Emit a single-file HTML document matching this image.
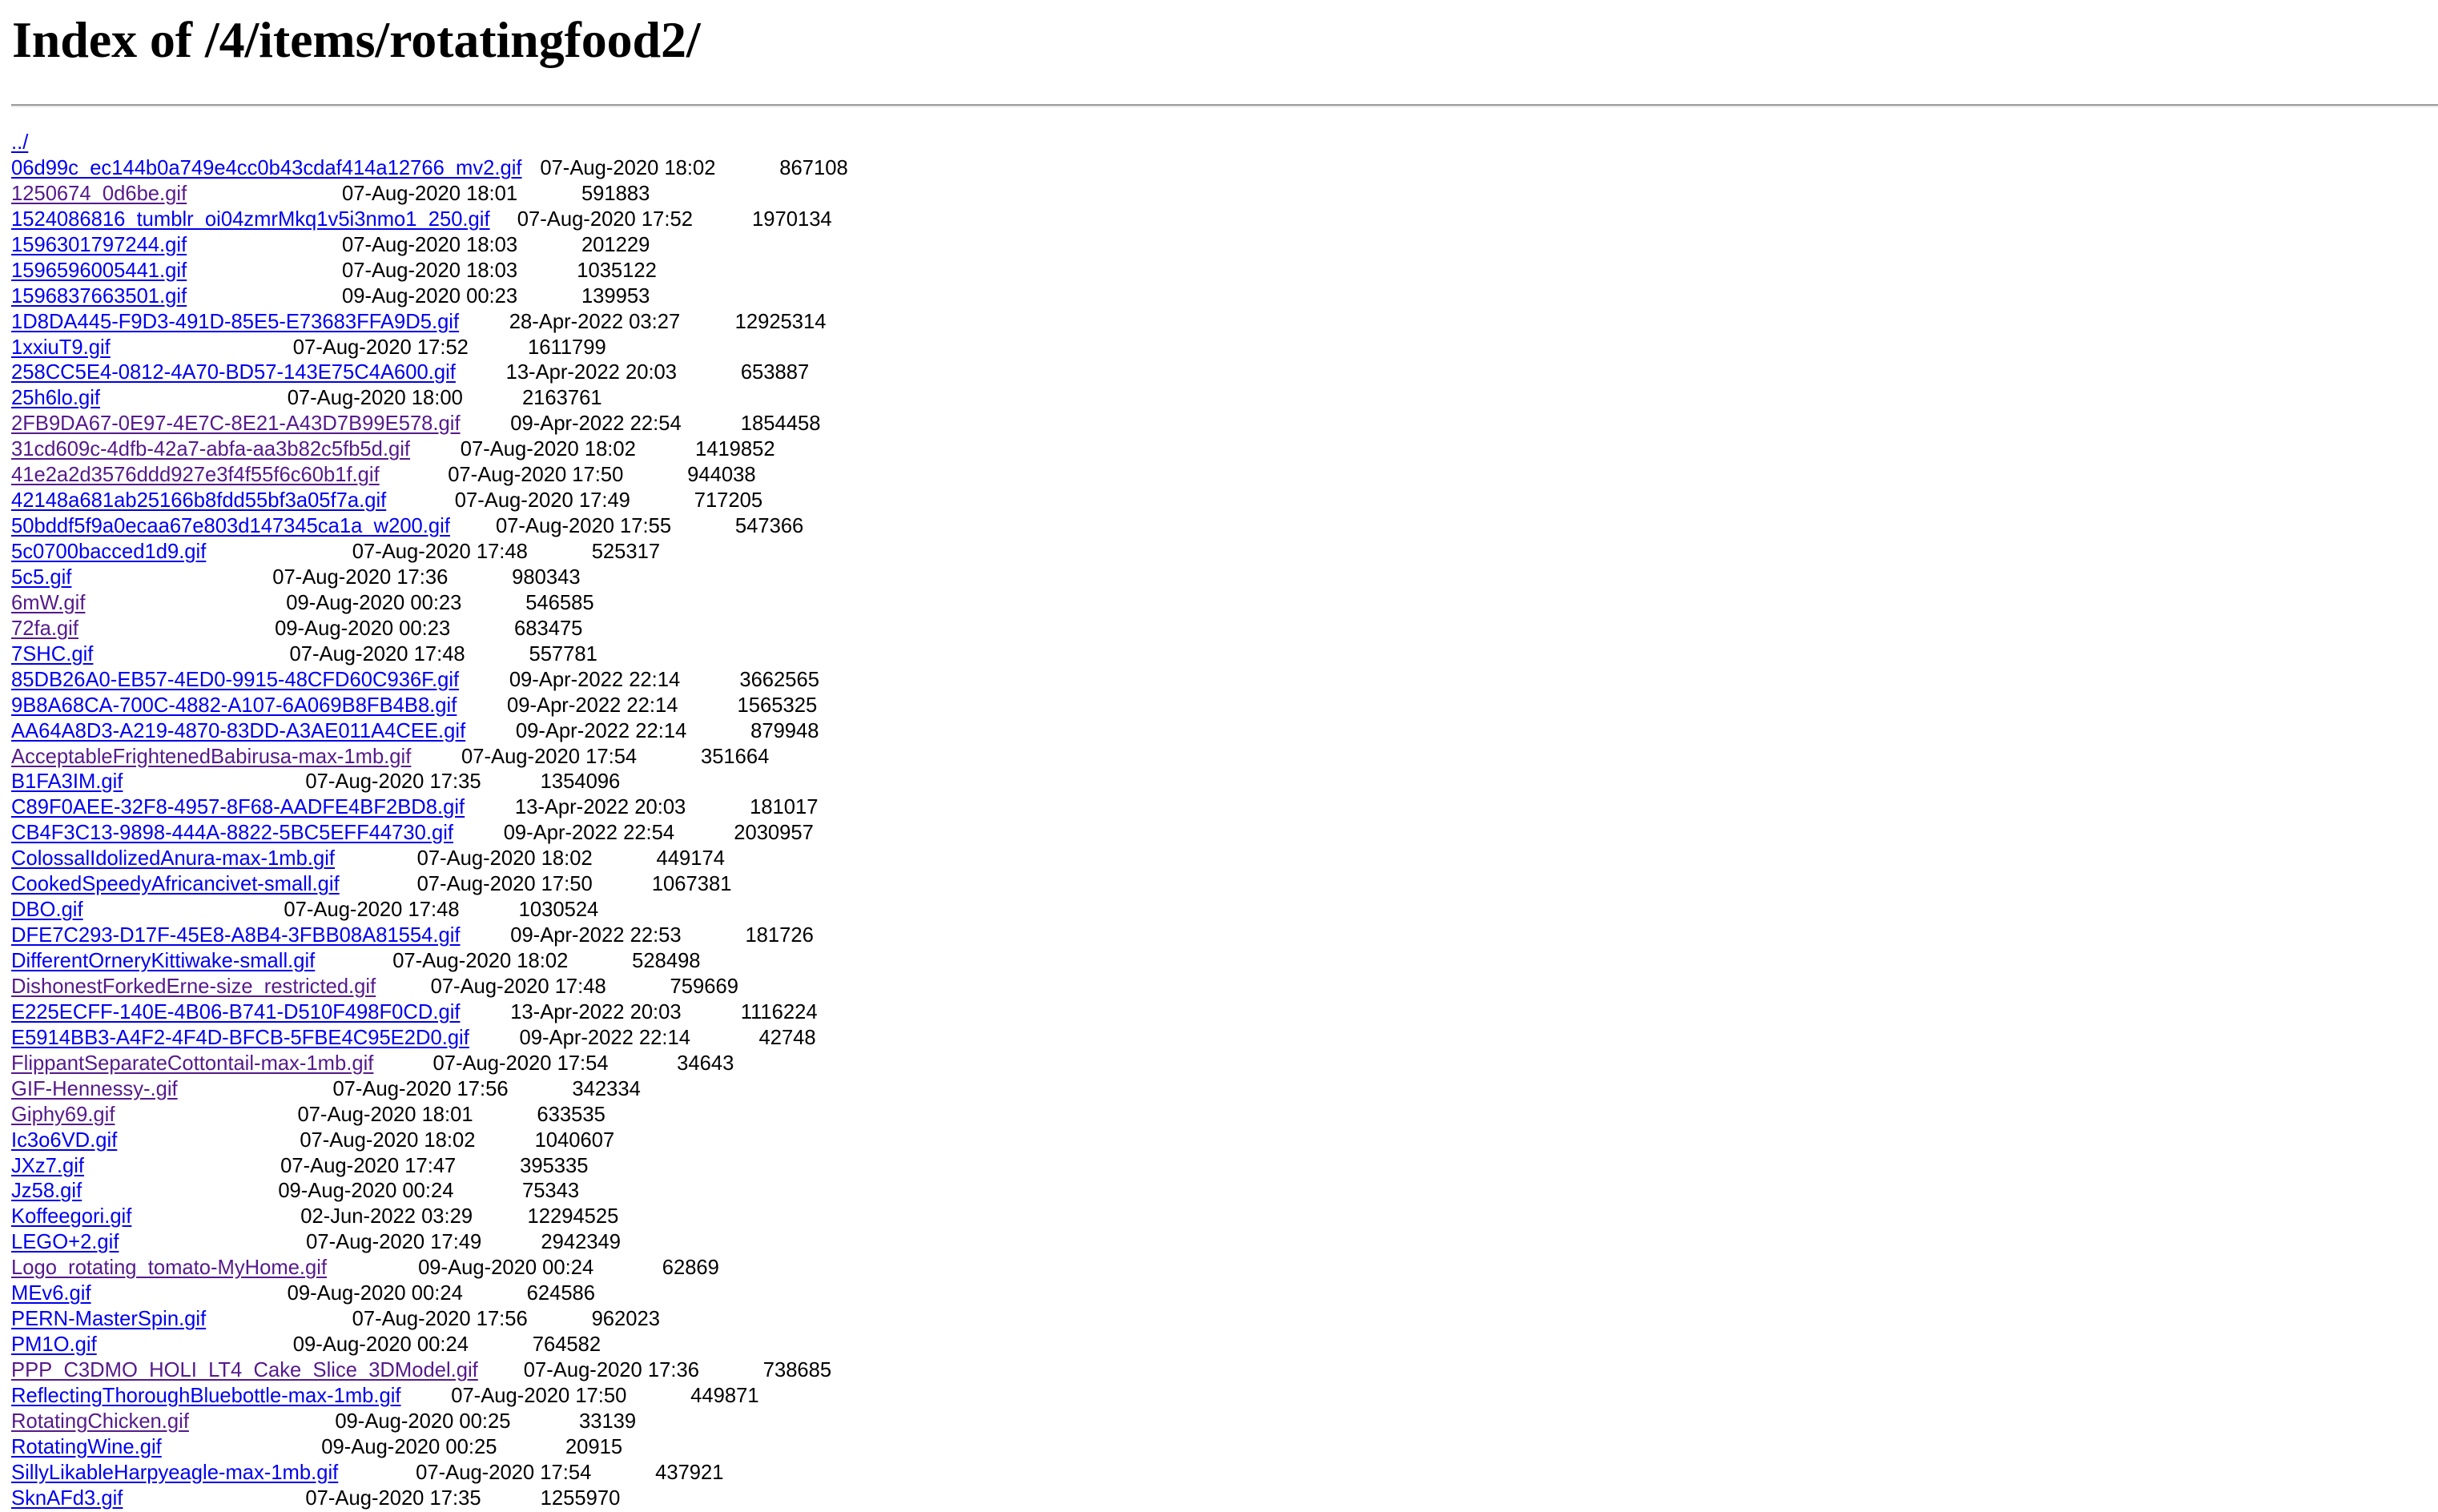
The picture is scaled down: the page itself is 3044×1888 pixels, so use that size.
<!DOCTYPE html>
<html><head><meta charset="utf-8"><style>
html,body{margin:0;padding:0;background:#fff;width:3044px;height:1878px;overflow:hidden}
h1{position:absolute;left:15px;top:18px;margin:0;font:bold 64px/64px "Liberation Serif",serif;color:#000;white-space:nowrap;letter-spacing:-0.1px}
.hr{position:absolute;left:14px;right:0;top:130px;height:2px;background:#9a9a9a;border-bottom:2px solid #e8e8e8}
.l{position:absolute;left:14px;top:163px;font:25.6px/31.94px "Liberation Sans",sans-serif;color:#000;white-space:normal}
.l div{height:31.94px;white-space:nowrap}
a{color:#0000ee;text-decoration:underline;text-underline-offset:3px}
a.v{color:#551a8b}
b{display:inline-block;width:calc(var(--n)*5.7px)}
</style></head><body>
<h1>Index of /4/items/rotatingfood2/</h1>
<div class="hr"></div>
<div class="l">
<div><a>../</a></div>
<div><a>06d99c_ec144b0a749e4cc0b43cdaf414a12766_mv2.gif</a><b style="--n:4"></b>07-Aug-2020 18:02<b style="--n:14"></b>867108</div>
<div><a class="v">1250674_0d6be.gif</a><b style="--n:34"></b>07-Aug-2020 18:01<b style="--n:14"></b>591883</div>
<div><a>1524086816_tumblr_oi04zmrMkq1v5i3nmo1_250.gif</a><b style="--n:6"></b>07-Aug-2020 17:52<b style="--n:13"></b>1970134</div>
<div><a>1596301797244.gif</a><b style="--n:34"></b>07-Aug-2020 18:03<b style="--n:14"></b>201229</div>
<div><a>1596596005441.gif</a><b style="--n:34"></b>07-Aug-2020 18:03<b style="--n:13"></b>1035122</div>
<div><a>1596837663501.gif</a><b style="--n:34"></b>09-Aug-2020 00:23<b style="--n:14"></b>139953</div>
<div><a>1D8DA445-F9D3-491D-85E5-E73683FFA9D5.gif</a><b style="--n:11"></b>28-Apr-2022 03:27<b style="--n:12"></b>12925314</div>
<div><a>1xxiuT9.gif</a><b style="--n:40"></b>07-Aug-2020 17:52<b style="--n:13"></b>1611799</div>
<div><a>258CC5E4-0812-4A70-BD57-143E75C4A600.gif</a><b style="--n:11"></b>13-Apr-2022 20:03<b style="--n:14"></b>653887</div>
<div><a>25h6lo.gif</a><b style="--n:41"></b>07-Aug-2020 18:00<b style="--n:13"></b>2163761</div>
<div><a class="v">2FB9DA67-0E97-4E7C-8E21-A43D7B99E578.gif</a><b style="--n:11"></b>09-Apr-2022 22:54<b style="--n:13"></b>1854458</div>
<div><a class="v">31cd609c-4dfb-42a7-abfa-aa3b82c5fb5d.gif</a><b style="--n:11"></b>07-Aug-2020 18:02<b style="--n:13"></b>1419852</div>
<div><a class="v">41e2a2d3576ddd927e3f4f55f6c60b1f.gif</a><b style="--n:15"></b>07-Aug-2020 17:50<b style="--n:14"></b>944038</div>
<div><a>42148a681ab25166b8fdd55bf3a05f7a.gif</a><b style="--n:15"></b>07-Aug-2020 17:49<b style="--n:14"></b>717205</div>
<div><a>50bddf5f9a0ecaa67e803d147345ca1a_w200.gif</a><b style="--n:10"></b>07-Aug-2020 17:55<b style="--n:14"></b>547366</div>
<div><a>5c0700bacced1d9.gif</a><b style="--n:32"></b>07-Aug-2020 17:48<b style="--n:14"></b>525317</div>
<div><a>5c5.gif</a><b style="--n:44"></b>07-Aug-2020 17:36<b style="--n:14"></b>980343</div>
<div><a class="v">6mW.gif</a><b style="--n:44"></b>09-Aug-2020 00:23<b style="--n:14"></b>546585</div>
<div><a class="v">72fa.gif</a><b style="--n:43"></b>09-Aug-2020 00:23<b style="--n:14"></b>683475</div>
<div><a>7SHC.gif</a><b style="--n:43"></b>07-Aug-2020 17:48<b style="--n:14"></b>557781</div>
<div><a>85DB26A0-EB57-4ED0-9915-48CFD60C936F.gif</a><b style="--n:11"></b>09-Apr-2022 22:14<b style="--n:13"></b>3662565</div>
<div><a>9B8A68CA-700C-4882-A107-6A069B8FB4B8.gif</a><b style="--n:11"></b>09-Apr-2022 22:14<b style="--n:13"></b>1565325</div>
<div><a>AA64A8D3-A219-4870-83DD-A3AE011A4CEE.gif</a><b style="--n:11"></b>09-Apr-2022 22:14<b style="--n:14"></b>879948</div>
<div><a class="v">AcceptableFrightenedBabirusa-max-1mb.gif</a><b style="--n:11"></b>07-Aug-2020 17:54<b style="--n:14"></b>351664</div>
<div><a>B1FA3IM.gif</a><b style="--n:40"></b>07-Aug-2020 17:35<b style="--n:13"></b>1354096</div>
<div><a>C89F0AEE-32F8-4957-8F68-AADFE4BF2BD8.gif</a><b style="--n:11"></b>13-Apr-2022 20:03<b style="--n:14"></b>181017</div>
<div><a>CB4F3C13-9898-444A-8822-5BC5EFF44730.gif</a><b style="--n:11"></b>09-Apr-2022 22:54<b style="--n:13"></b>2030957</div>
<div><a>ColossalIdolizedAnura-max-1mb.gif</a><b style="--n:18"></b>07-Aug-2020 18:02<b style="--n:14"></b>449174</div>
<div><a>CookedSpeedyAfricancivet-small.gif</a><b style="--n:17"></b>07-Aug-2020 17:50<b style="--n:13"></b>1067381</div>
<div><a>DBO.gif</a><b style="--n:44"></b>07-Aug-2020 17:48<b style="--n:13"></b>1030524</div>
<div><a>DFE7C293-D17F-45E8-A8B4-3FBB08A81554.gif</a><b style="--n:11"></b>09-Apr-2022 22:53<b style="--n:14"></b>181726</div>
<div><a>DifferentOrneryKittiwake-small.gif</a><b style="--n:17"></b>07-Aug-2020 18:02<b style="--n:14"></b>528498</div>
<div><a class="v">DishonestForkedErne-size_restricted.gif</a><b style="--n:12"></b>07-Aug-2020 17:48<b style="--n:14"></b>759669</div>
<div><a>E225ECFF-140E-4B06-B741-D510F498F0CD.gif</a><b style="--n:11"></b>13-Apr-2022 20:03<b style="--n:13"></b>1116224</div>
<div><a>E5914BB3-A4F2-4F4D-BFCB-5FBE4C95E2D0.gif</a><b style="--n:11"></b>09-Apr-2022 22:14<b style="--n:15"></b>42748</div>
<div><a class="v">FlippantSeparateCottontail-max-1mb.gif</a><b style="--n:13"></b>07-Aug-2020 17:54<b style="--n:15"></b>34643</div>
<div><a class="v">GIF-Hennessy-.gif</a><b style="--n:34"></b>07-Aug-2020 17:56<b style="--n:14"></b>342334</div>
<div><a class="v">Giphy69.gif</a><b style="--n:40"></b>07-Aug-2020 18:01<b style="--n:14"></b>633535</div>
<div><a>Ic3o6VD.gif</a><b style="--n:40"></b>07-Aug-2020 18:02<b style="--n:13"></b>1040607</div>
<div><a>JXz7.gif</a><b style="--n:43"></b>07-Aug-2020 17:47<b style="--n:14"></b>395335</div>
<div><a>Jz58.gif</a><b style="--n:43"></b>09-Aug-2020 00:24<b style="--n:15"></b>75343</div>
<div><a>Koffeegori.gif</a><b style="--n:37"></b>02-Jun-2022 03:29<b style="--n:12"></b>12294525</div>
<div><a>LEGO+2.gif</a><b style="--n:41"></b>07-Aug-2020 17:49<b style="--n:13"></b>2942349</div>
<div><a class="v">Logo_rotating_tomato-MyHome.gif</a><b style="--n:20"></b>09-Aug-2020 00:24<b style="--n:15"></b>62869</div>
<div><a>MEv6.gif</a><b style="--n:43"></b>09-Aug-2020 00:24<b style="--n:14"></b>624586</div>
<div><a>PERN-MasterSpin.gif</a><b style="--n:32"></b>07-Aug-2020 17:56<b style="--n:14"></b>962023</div>
<div><a>PM1O.gif</a><b style="--n:43"></b>09-Aug-2020 00:24<b style="--n:14"></b>764582</div>
<div><a class="v">PPP_C3DMO_HOLI_LT4_Cake_Slice_3DModel.gif</a><b style="--n:10"></b>07-Aug-2020 17:36<b style="--n:14"></b>738685</div>
<div><a>ReflectingThoroughBluebottle-max-1mb.gif</a><b style="--n:11"></b>07-Aug-2020 17:50<b style="--n:14"></b>449871</div>
<div><a class="v">RotatingChicken.gif</a><b style="--n:32"></b>09-Aug-2020 00:25<b style="--n:15"></b>33139</div>
<div><a>RotatingWine.gif</a><b style="--n:35"></b>09-Aug-2020 00:25<b style="--n:15"></b>20915</div>
<div><a>SillyLikableHarpyeagle-max-1mb.gif</a><b style="--n:17"></b>07-Aug-2020 17:54<b style="--n:14"></b>437921</div>
<div><a>SknAFd3.gif</a><b style="--n:40"></b>07-Aug-2020 17:35<b style="--n:13"></b>1255970</div>
</div>
</body></html>
